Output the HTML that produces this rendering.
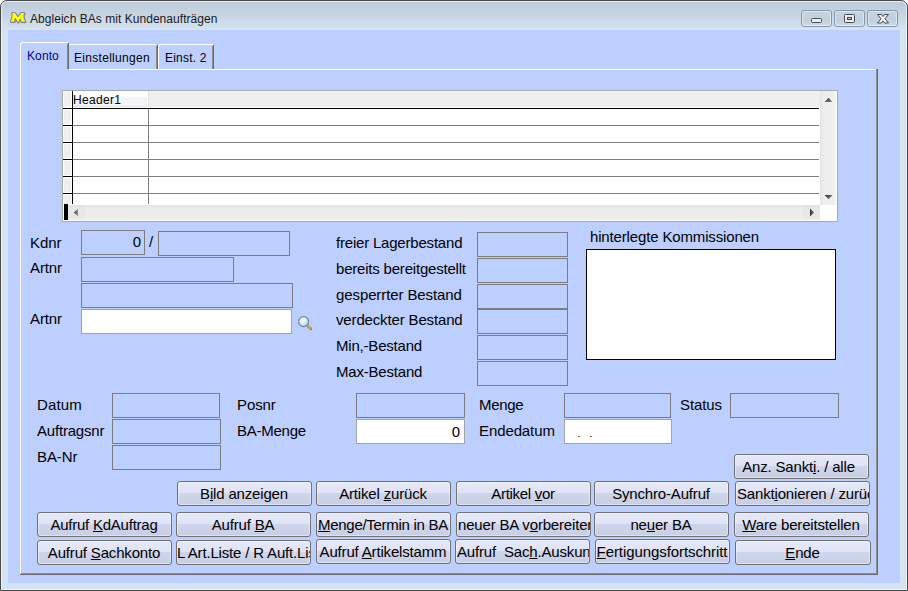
<!DOCTYPE html>
<html>
<head>
<meta charset="utf-8">
<style>
html,body{margin:0;padding:0;background:#fff;overflow:hidden;}
body{width:908px;height:591px;position:relative;font-family:"Liberation Sans",sans-serif;color:#000;}
*{box-sizing:border-box;}
.a{position:absolute;}
#win{left:0;top:0;width:908px;height:591px;border:1px solid #484848;border-radius:7px 7px 0 0;
 background:linear-gradient(to bottom,#bccad9 0px,#c7d5e3 14px,#d6e3f0 29px,#d6e3f0 100%);
 box-shadow:inset 0 0 0 1px #e9f0f8;}
#client{left:8px;top:30px;width:892px;height:553px;background:#bdcfff;}
#title{left:30px;top:11px;font-size:12px;line-height:16px;color:#1a1a1a;white-space:nowrap;letter-spacing:0.04px;}
.cb{top:10px;width:31px;height:17px;border:1px solid #8596ae;border-radius:3px;
 background:linear-gradient(to bottom,#c5d2e0 0,#c3d0de 45%,#bfcddc 52%,#cddae7 100%);
 box-shadow:inset 0 0 0 1px rgba(255,255,255,.45);}
/* tabs */
#panel{left:20px;top:69px;width:858px;height:506px;border-left:1px solid #fff;border-top:1px solid #fff;}
.lbl{font-size:15px;line-height:17px;white-space:nowrap;letter-spacing:-0.1px;}
.tb{border:1px solid #7c7c7a;height:25px;}
.tw{border:1px solid #a3a3a2;height:25px;background:#fff;}
.btn{width:135px;height:25px;border:1px solid #707070;border-radius:3px;
 background:linear-gradient(to bottom,#e4e8f8 0,#dfe3f5 46%,#cfd5ea 47%,#c9cee3 100%);
 box-shadow:inset 0 0 0 1px rgba(255,255,255,.42);
 font-size:15px;line-height:17px;text-align:center;white-space:nowrap;overflow:hidden;padding:3px 1px 0 0;letter-spacing:-0.17px;}
.btn u{text-decoration:underline;text-underline-offset:1px;}
.btn.l{text-align:left;padding-left:1px;}
</style>
</head>
<body>
<div id="win" class="a"></div>
<div id="client" class="a"></div>

<!-- title bar -->
<svg class="a" style="left:9px;top:11px" width="19" height="14" viewBox="0 0 19 14">
 <path d="M3.1 2H5.9L9 6.2L12.1 2H15.3V3L14.6 3.5V7L15.6 9.2L16.3 10.8H12.3V9.7L11.4 7.2L9 11.4L6.3 6.8L5 8.9L5.7 9.8V10.8H1.9L2 9.8L3.1 7.4L3.5 3.1Z" transform="translate(.6,.7)" fill="#8a8a9a" stroke="#8a8a9a" stroke-width="1.6" stroke-linejoin="round" opacity=".55"/>
 <path d="M3.1 2H5.9L9 6.2L12.1 2H15.3V3L14.6 3.5V7L15.6 9.2L16.3 10.8H12.3V9.7L11.4 7.2L9 11.4L6.3 6.8L5 8.9L5.7 9.8V10.8H1.9L2 9.8L3.1 7.4L3.5 3.1Z" fill="#ffff00" stroke="#6f6f9c" stroke-width="1.7" stroke-linejoin="round" paint-order="stroke"/>
</svg>
<div id="title" class="a">Abgleich BAs mit Kundenaufträgen</div>
<div class="a cb" style="left:801px"></div>
<div class="a cb" style="left:834px"></div>
<div class="a cb" style="left:867px"></div>
<svg class="a" style="left:801px;top:10px" width="97" height="17" viewBox="0 0 97 17">
 <rect x="10.5" y="8.5" width="10" height="4" rx="1" fill="#ececec" stroke="#454a55"/>
 <rect x="43.5" y="4.5" width="10" height="8" rx="1" fill="#ececec" stroke="#454a55"/>
 <rect x="46.5" y="7.5" width="4" height="2" fill="#b9c7d6" stroke="#454a55"/>
 <path d="M76.5 4.5h4l1.5 2 1.5-2h4l-3.5 4.25 3.5 4.25h-4l-1.5-2-1.5 2h-4l3.5-4.25z" fill="#f0f0f0" stroke="#454a55" stroke-linejoin="round"/>
</svg>

<!-- tab panel -->
<div id="panel" class="a"></div>
<div class="a" style="left:876px;top:69px;width:1px;height:505px;background:#8d8d88"></div>
<div class="a" style="left:877px;top:69px;width:1px;height:506px;background:#6a6965"></div>
<div class="a" style="left:21px;top:573px;width:856px;height:1px;background:#8d8d88"></div>
<div class="a" style="left:20px;top:574px;width:858px;height:1px;background:#6a6965"></div>

<!-- tabs -->
<div class="a" style="left:20px;top:42px;width:49px;height:28px;background:#bdcfff;border-left:1px solid #fff;border-top:1px solid #fff;border-radius:3px 3px 0 0"></div>
<div class="a" style="left:67px;top:44px;width:1px;height:25px;background:#8d8d88"></div>
<div class="a" style="left:68px;top:43px;width:1px;height:26px;background:#6a6965"></div>
<div class="a" style="left:27px;top:48px;font-size:12px;line-height:16px;color:#000094;letter-spacing:0.1px">Konto</div>

<div class="a" style="left:69px;top:44px;width:87px;height:1px;background:#fff"></div>
<div class="a" style="left:156px;top:46px;width:1px;height:23px;background:#8d8d88"></div>
<div class="a" style="left:157px;top:45px;width:1px;height:24px;background:#6a6965"></div>
<div class="a" style="left:74px;top:50px;font-size:12px;line-height:16px;letter-spacing:0.3px">Einstellungen</div>

<div class="a" style="left:158px;top:44px;width:55px;height:25px;border-left:1px solid #fff;border-top:1px solid #fff;border-radius:3px 0 0 0"></div>
<div class="a" style="left:212px;top:46px;width:1px;height:23px;background:#8d8d88"></div>
<div class="a" style="left:213px;top:45px;width:1px;height:24px;background:#6a6965"></div>
<div class="a" style="left:165px;top:50px;font-size:12px;line-height:16px;letter-spacing:0.2px">Einst. 2</div>

<!-- grid -->
<div class="a" id="grid" style="left:62px;top:90px;width:776px;height:132px;border:1px solid #a9a9a9;background:#fff"></div>
<div class="a" style="left:72px;top:91px;width:748px;height:1px;background:#f6f6f6"></div>
<div class="a" style="left:72px;top:92px;width:748px;height:15px;background:#efefef"></div>
<div class="a" style="left:73px;top:91px;width:75px;height:15px;background:linear-gradient(#fff 0,#fff 6px,#f3f4f6 6px,#f1f2f5 15px)"></div>
<div class="a" style="left:147px;top:91px;width:1px;height:15px;background:#fff"></div>
<div class="a" style="left:73px;top:106px;width:75px;height:1px;background:#e3e3e3"></div>
<div class="a" style="left:148px;top:91px;width:1px;height:16px;background:#e0e0e0"></div>
<div class="a" style="left:64px;top:92px;width:7px;height:15px;background:#efefef"></div>
<div class="a" style="left:64px;top:110px;width:7px;height:14px;background:#efefef"></div>
<div class="a" style="left:64px;top:127px;width:7px;height:14px;background:#efefef"></div>
<div class="a" style="left:64px;top:144px;width:7px;height:14px;background:#efefef"></div>
<div class="a" style="left:64px;top:161px;width:7px;height:14px;background:#efefef"></div>
<div class="a" style="left:64px;top:178px;width:7px;height:14px;background:#efefef"></div>
<div class="a" style="left:64px;top:195px;width:7px;height:9px;background:#efefef"></div>
<div class="a" style="left:72px;top:91px;width:1px;height:113px;background:#000"></div>
<div class="a" style="left:63px;top:108px;width:756px;height:1px;background:#000"></div>
<div class="a" style="left:148px;top:109px;width:1px;height:95px;background:#808080"></div>
<div class="a" style="left:73px;top:125px;width:746px;height:1px;background:#808080"></div>
<div class="a" style="left:63px;top:125px;width:9px;height:1px;background:#000"></div>
<div class="a" style="left:73px;top:142px;width:746px;height:1px;background:#808080"></div>
<div class="a" style="left:63px;top:142px;width:9px;height:1px;background:#000"></div>
<div class="a" style="left:73px;top:159px;width:746px;height:1px;background:#808080"></div>
<div class="a" style="left:63px;top:159px;width:9px;height:1px;background:#000"></div>
<div class="a" style="left:73px;top:176px;width:746px;height:1px;background:#808080"></div>
<div class="a" style="left:63px;top:176px;width:9px;height:1px;background:#000"></div>
<div class="a" style="left:73px;top:193px;width:746px;height:1px;background:#808080"></div>
<div class="a" style="left:63px;top:193px;width:9px;height:1px;background:#000"></div>
<div class="a" style="left:73px;top:92px;font-size:12px;line-height:16px;letter-spacing:0.33px">Header1</div>
<!-- scrollbars -->
<div class="a" style="left:820px;top:91px;width:16px;height:114px;background:linear-gradient(to right,#e4e4e4,#eeeeee 25%,#eeeeee 80%,#f5f5f5)"></div>
<div class="a" style="left:68px;top:205px;width:752px;height:15px;background:linear-gradient(to bottom,#e4e4e4,#ebebeb 25%,#ebebeb 80%,#f3f3f3)"></div>
<div class="a" style="left:68px;top:205px;width:17px;height:15px;background:linear-gradient(to bottom,#e1e1e1,#e7e7e7 25%,#e7e7e7 80%,#efefef)"></div>
<div class="a" style="left:803px;top:205px;width:17px;height:15px;background:linear-gradient(to bottom,#e1e1e1,#e7e7e7 25%,#e7e7e7 80%,#efefef)"></div>
<div class="a" style="left:64px;top:204px;width:4px;height:16px;background:#000"></div>
<svg class="a" style="left:820px;top:91px" width="16" height="114" viewBox="0 0 16 114">
 <defs><linearGradient id="ag" x1="0" y1="0" x2="1" y2="1"><stop offset="0" stop-color="#2a2a2a"/><stop offset="1" stop-color="#8a8a8a"/></linearGradient></defs>
 <path d="M4.6 11L8.5 6.8L12.4 11z" fill="url(#ag)"/>
 <path d="M4.6 104L8.5 108.2L12.4 104z" fill="url(#ag)"/>
</svg>
<svg class="a" style="left:63px;top:205px" width="757" height="15" viewBox="0 0 757 15">
 <defs><linearGradient id="al" x1="0" y1="0" x2="1" y2="0"><stop offset="0" stop-color="#2c2c2c"/><stop offset="1" stop-color="#9a9a9a"/></linearGradient><linearGradient id="ar" x1="0" y1="0" x2="1" y2="0"><stop offset="0" stop-color="#2c2c2c"/><stop offset="1" stop-color="#8a8a8a"/></linearGradient></defs>
 <path d="M15 3.8L10.9 7.5L15 11.2z" fill="url(#al)"/>
 <path d="M747 3.6L751.2 7.5L747 11.4z" fill="url(#ar)"/>
</svg>

<!-- left block -->
<div class="a lbl" style="left:30px;top:234px">Kdnr</div>
<div class="a tb" style="left:81px;top:230px;width:64px"></div>
<div class="a lbl" style="left:101px;top:233px;width:40px;text-align:right">0</div>
<div class="a lbl" style="left:149px;top:233px">/</div>
<div class="a tb" style="left:158px;top:231px;width:132px"></div>
<div class="a lbl" style="left:30px;top:259px">Artnr</div>
<div class="a tb" style="left:81px;top:257px;width:153px"></div>
<div class="a tb" style="left:81px;top:283px;width:212px"></div>
<div class="a lbl" style="left:30px;top:310px">Artnr</div>
<div class="a tw" style="left:81px;top:309px;width:211px"></div>
<svg class="a" style="left:297px;top:315px" width="16" height="16" viewBox="0 0 16 16">
 <defs><radialGradient id="lens" cx="40%" cy="35%" r="65%"><stop offset="0" stop-color="#ffffff"/><stop offset=".55" stop-color="#d6ecf7"/><stop offset="1" stop-color="#a9d3ea"/></radialGradient></defs>
 <path d="M9.8 9.8L13.9 13.9" stroke="#96711f" stroke-width="2.6" stroke-linecap="round"/>
 <path d="M9.8 9.6L13.8 13.6" stroke="#f3c544" stroke-width="1.3" stroke-linecap="round"/>
 <circle cx="6.6" cy="6.6" r="5" fill="url(#lens)" stroke="#6d8499" stroke-width="1.15"/>
</svg>

<!-- middle block -->
<div class="a lbl" style="left:336px;top:234px;letter-spacing:-0.2px">freier Lagerbestand</div>
<div class="a lbl" style="left:336px;top:260px;letter-spacing:-0.2px">bereits bereitgestellt</div>
<div class="a lbl" style="left:336px;top:286px;letter-spacing:-0.1px">gesperrter Bestand</div>
<div class="a lbl" style="left:336px;top:311px;letter-spacing:-0.15px">verdeckter Bestand</div>
<div class="a lbl" style="left:336px;top:337px;letter-spacing:-0.2px">Min,-Bestand</div>
<div class="a lbl" style="left:336px;top:363px;letter-spacing:-0.2px">Max-Bestand</div>
<div class="a tb" style="left:477px;top:232px;width:91px"></div>
<div class="a tb" style="left:477px;top:258px;width:91px"></div>
<div class="a tb" style="left:477px;top:284px;width:91px"></div>
<div class="a tb" style="left:477px;top:309px;width:91px"></div>
<div class="a tb" style="left:477px;top:335px;width:91px"></div>
<div class="a tb" style="left:477px;top:361px;width:91px"></div>

<!-- right block -->
<div class="a lbl" style="left:590px;top:228px;letter-spacing:-0.15px">hinterlegte Kommissionen</div>
<div class="a" style="left:586px;top:249px;width:250px;height:111px;border:1px solid #000;background:#fff"></div>

<!-- lower fields -->
<div class="a lbl" style="left:37px;top:396px;letter-spacing:0.15px">Datum</div>
<div class="a lbl" style="left:37px;top:422px;letter-spacing:-0.2px">Auftragsnr</div>
<div class="a lbl" style="left:37px;top:448px">BA-Nr</div>
<div class="a tb" style="left:112px;top:393px;width:108px"></div>
<div class="a tb" style="left:112px;top:419px;width:109px"></div>
<div class="a tb" style="left:112px;top:445px;width:109px"></div>
<div class="a lbl" style="left:237px;top:396px">Posnr</div>
<div class="a lbl" style="left:237px;top:422px;letter-spacing:-0.25px">BA-Menge</div>
<div class="a tb" style="left:356px;top:393px;width:109px"></div>
<div class="a tw" style="left:356px;top:419px;width:109px"></div>
<div class="a lbl" style="left:400px;top:423px;width:60px;text-align:right">0</div>
<div class="a lbl" style="left:479px;top:396px;letter-spacing:-0.3px">Menge</div>
<div class="a lbl" style="left:479px;top:422px">Endedatum</div>
<div class="a tb" style="left:564px;top:393px;width:107px"></div>
<div class="a tw" style="left:564px;top:419px;width:108px"></div>
<div class="a" style="left:578px;top:436px;width:2px;height:1px;background:linear-gradient(to right,#8a3a10 50%,#4a90e0 50%)"></div>
<div class="a" style="left:590px;top:436px;width:2px;height:1px;background:linear-gradient(to right,#8a3a10 50%,#4a90e0 50%)"></div>
<div class="a lbl" style="left:680px;top:396px">Status</div>
<div class="a tb" style="left:730px;top:393px;width:109px"></div>

<!-- buttons -->
<div class="a btn" style="left:734px;top:454px;padding-right:6px">Anz. Sankt<u>i</u>. / alle</div>

<div class="a btn" style="left:177px;top:481px">B<u>i</u>ld anzeigen</div>
<div class="a btn" style="left:316px;top:481px">Artikel <u>z</u>urück</div>
<div class="a btn" style="left:456px;top:481px;letter-spacing:-0.3px">Artikel <u>v</u>or</div>
<div class="a btn" style="left:594px;top:481px">Synchro-Aufruf</div>
<div class="a btn l" style="left:735px;top:481px">Sankt<u>i</u>onieren / zurück</div>

<div class="a btn" style="left:37px;top:512px;letter-spacing:-0.24px">Aufruf <u>K</u>dAuftrag</div>
<div class="a btn" style="left:176px;top:512px">Aufruf <u>B</u>A</div>
<div class="a btn" style="left:316px;top:512px;letter-spacing:-0.28px"><u>M</u>enge/Termin in BA</div>
<div class="a btn l" style="left:456px;top:512px">neuer BA v<u>o</u>rbereiten</div>
<div class="a btn" style="left:594px;top:512px">ne<u>u</u>er BA</div>
<div class="a btn" style="left:734px;top:512px"><u>W</u>are bereitstellen</div>

<div class="a btn" style="left:37px;top:540px">Aufruf <u>S</u>achkonto</div>
<div class="a btn l" style="left:176px;top:540px;padding-left:0">L Art.Liste / R Auft.Liste</div>
<div class="a btn" style="left:316px;top:539px">Aufruf <u>A</u>rtikelstamm</div>
<div class="a btn l" style="left:455px;top:539px">Aufruf&nbsp; Sac<u>h</u>.Auskunft</div>
<div class="a btn" style="left:595px;top:539px;letter-spacing:-0.08px"><u>F</u>ertigungsfortschritt</div>
<div class="a btn" style="left:735px;top:540px;width:136px"><u>E</u>nde</div>

</body>
</html>
